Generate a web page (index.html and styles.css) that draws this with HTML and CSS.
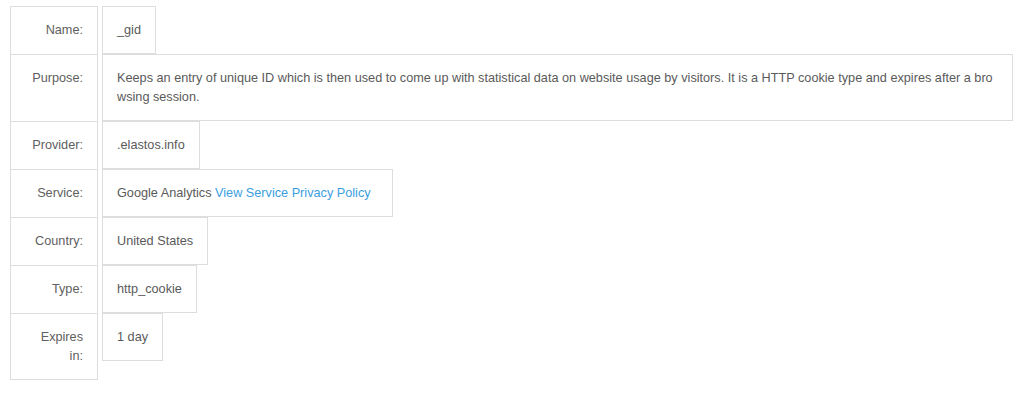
FILE: index.html
```html
<!DOCTYPE html>
<html lang="en">
<head>
<meta charset="utf-8">
<title>Cookie details</title>
<link rel="stylesheet" href="styles.css">
</head>
<body>
<div class="details">
  <div class="label">Name:</div>
  <div class="value">_gid</div>

  <div class="label">Purpose:</div>
  <div class="value value-wrap">Keeps an entry of unique ID which is then used to come up with statistical data on website usage by visitors. It is a HTTP cookie type and expires after a browsing session.</div>

  <div class="label">Provider:</div>
  <div class="value">.elastos.info</div>

  <div class="label">Service:</div>
  <div class="value value-service">Google Analytics <a class="link" href="#">View Service Privacy Policy</a></div>

  <div class="label">Country:</div>
  <div class="value">United States</div>

  <div class="label">Type:</div>
  <div class="value">http_cookie</div>

  <div class="label label-last">Expires in:</div>
  <div class="value">1 day</div>
</div>
</body>
</html>
```

FILE: styles.css
```css
html, body {
  margin: 0;
  padding: 0;
  background: #ffffff;
}

body {
  font-family: "Liberation Sans", Arial, sans-serif;
  font-size: 12.7px;
  line-height: 19px;
  color: #5a5a5a;
}

.details {
  display: grid;
  grid-template-columns: 88px minmax(0, 1fr);
  column-gap: 4px;
  padding: 6px 11px 0 10px;
}

.label {
  border: 1px solid #dddddd;
  border-bottom: none;
  padding: 13.5px 14px;
  text-align: right;
  color: #606060;
}

.label-last {
  border-bottom: 1px solid #dddddd;
}

.value {
  justify-self: start;
  align-self: start;
  border: 1px solid #dddddd;
  padding: 13.5px 14px;
  max-width: 100%;
  box-sizing: border-box;
}

.value-wrap {
  justify-self: stretch;
  word-break: break-all;
}

.value-service {
  padding-right: 21px;
}

.link {
  color: #3b9ee0;
  text-decoration: none;
}
```
